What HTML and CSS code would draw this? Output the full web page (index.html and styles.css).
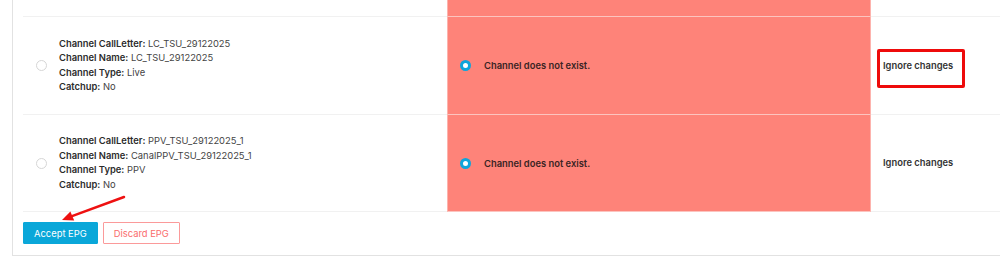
FILE: index.html
```html
<!DOCTYPE html>
<html lang="en">
<head>
  <meta charset="UTF-8">
  <meta name="viewport" content="width=device-width, initial-scale=1.0">
  <title>EPG Review</title>
  <link rel="stylesheet" href="styles.css">
</head>
<body>
  <div class="card">
    <table class="epg-table">
      <colgroup>
        <col class="col-channel">
        <col class="col-status">
        <col>
      </colgroup>
      <tr class="row-cut">
        <td></td>
        <td class="status"></td>
        <td></td>
      </tr>
      <tr class="data-row">
        <td class="channel">
          <div class="cell-flex">
            <span class="radio"></span>
            <div class="info">
              <div><b>Channel CallLetter:</b> LC_TSU_29122025</div>
              <div><b>Channel Name:</b> LC_TSU_29122025</div>
              <div><b>Channel Type:</b> Live</div>
              <div><b>Catchup:</b> No</div>
            </div>
          </div>
        </td>
        <td class="status">
          <div class="cell-flex status-flex">
            <span class="radio checked"></span>
            <span>Channel does not exist.</span>
          </div>
        </td>
        <td class="action">
          <span class="ignore marked">Ignore changes</span>
        </td>
      </tr>
      <tr class="data-row last">
        <td class="channel">
          <div class="cell-flex">
            <span class="radio"></span>
            <div class="info">
              <div><b>Channel CallLetter:</b> PPV_TSU_29122025_1</div>
              <div><b>Channel Name:</b> CanalPPV_TSU_29122025_1</div>
              <div><b>Channel Type:</b> PPV</div>
              <div><b>Catchup:</b> No</div>
            </div>
          </div>
        </td>
        <td class="status">
          <div class="cell-flex status-flex">
            <span class="radio checked"></span>
            <span>Channel does not exist.</span>
          </div>
        </td>
        <td class="action">
          <span class="ignore">Ignore changes</span>
        </td>
      </tr>
    </table>

    <div class="actions">
      <button class="btn btn-accept">Accept EPG</button>
      <button class="btn btn-discard">Discard EPG</button>

      <!-- annotation arrow pointing at the accept button -->
      <svg class="arrow" width="70" height="28" viewBox="0 0 70 28">
        <line x1="65" y1="2" x2="13" y2="21.2" stroke="#ee1111" stroke-width="2.5" stroke-linecap="round"/>
        <polygon points="3,25 15.2,25.6 11.4,16.6" fill="#ee1111"/>
      </svg>
    </div>
  </div>
</body>
</html>
```

FILE: styles.css
```css
html, body {
  overflow: hidden;
}

body {
  margin: 0;
  font-family: Inter, "Noto Sans", Arial, sans-serif;
  font-size: 9.4px;
  color: #333;
  background-color: #fff;
}

.card {
  margin-left: 12px;
  padding: 0 0 11px 10px;
  border-left: 1px solid #e2e2e2;
  border-bottom: 1px solid #e2e2e2;
  background-color: #fff;
}

.epg-table {
  width: 100%;
  border-collapse: separate;
  border-spacing: 0;
  table-layout: fixed;
}

.col-channel,
.col-status {
  width: 424px;
}

.epg-table td {
  padding: 0 12px;
  vertical-align: middle;
  box-sizing: border-box;
}

.row-cut td {
  height: 16px;
}

.data-row td {
  height: 98px;
  border-top: 1px solid #f1f1f1;
}

.data-row.last td {
  border-bottom: 1px solid #f1f1f1;
}

.epg-table td.status {
  background-color: #fe8379;
  border-left: 1px solid #fdb3ad;
  border-right: 1px solid #fdb3ad;
}

.data-row td.status {
  border-top-color: #fcc4bf;
}

.data-row.last td.status {
  border-bottom-color: #fcc4bf;
}

.cell-flex {
  display: flex;
  align-items: center;
}

.channel .cell-flex {
  padding-left: 1px;
}

.info {
  margin-left: 12px;
  line-height: 14.5px;
  color: #444;
}

.info b {
  font-weight: 600;
  color: #2b2b2b;
}

.radio {
  flex: none;
  width: 11px;
  height: 11px;
  border: 1px solid #d6d6d6;
  border-radius: 50%;
  box-sizing: border-box;
  background-color: #fff;
}

.radio.checked {
  border: 3.5px solid #0ea5db;
  background-color: #fff;
}

.status-flex {
  gap: 13px;
  font-weight: 600;
  color: #3a2424;
}

.ignore {
  display: inline-block;
  line-height: 14px;
  font-weight: 600;
  color: #333;
}

.ignore.marked {
  position: relative;
}

/* red highlight box drawn over the first action */
.ignore.marked::after {
  content: "";
  position: absolute;
  left: -6px;
  right: -12px;
  top: -10px;
  bottom: -15px;
  border: 3px solid #ee0b0b;
  border-radius: 2px;
}

.actions {
  position: relative;
  display: flex;
  gap: 5px;
  padding-top: 10px;
}

.btn {
  height: 22px;
  padding: 0 10px;
  font-family: inherit;
  font-size: 9.4px;
  white-space: nowrap;
  border-radius: 1px;
  cursor: pointer;
}

.btn-accept {
  background-color: #0aa7d9;
  color: #fff;
  border: 1px solid #0aa7d9;
}

.btn-discard {
  background-color: #fff;
  color: #fa6c6c;
  border: 1px solid #fb9a9a;
}

.arrow {
  position: absolute;
  left: 36px;
  top: -17px;
}
```
